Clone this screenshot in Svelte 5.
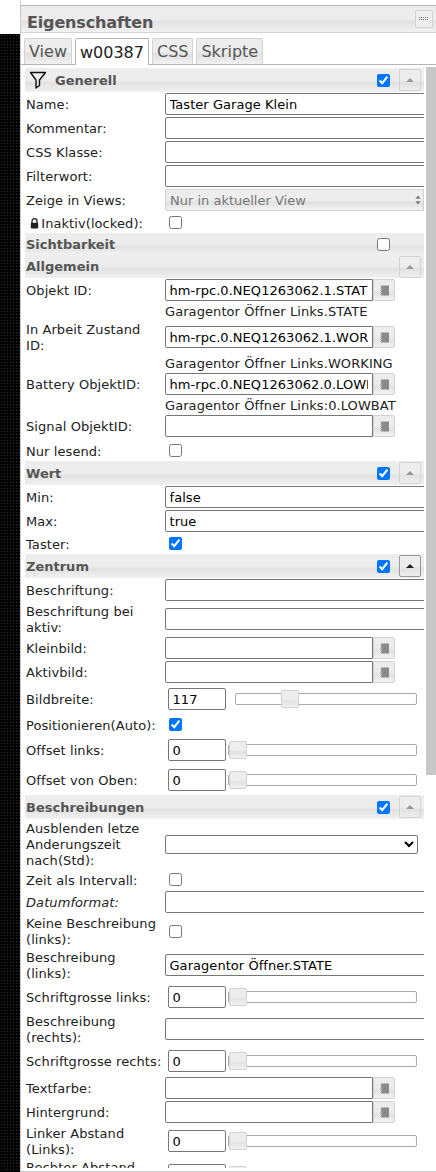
<script>
  const sections = [
    {
      title: "Generell", filter: true, check: true, toggle: true,
      rows: [
        { label: "Name:", type: "text", value: "Taster Garage Klein" },
        { label: "Kommentar:", type: "text" },
        { label: "CSS Klasse:", type: "text" },
        { label: "Filterwort:", type: "text" },
        { label: "Zeige in Views:", type: "views", value: "Nur in aktueller View" },
        { label: "Inaktiv(locked):", type: "check", lock: true },
      ],
    },
    { title: "Sichtbarkeit", check: false, rows: [] },
    {
      title: "Allgemein", toggle: true,
      rows: [
        { label: "Objekt ID:", type: "id", value: "hm-rpc.0.NEQ1263062.1.STATE", note: "Garagentor Öffner Links.STATE" },
        { label: "In Arbeit Zustand ID:", lines: 2, type: "id", value: "hm-rpc.0.NEQ1263062.1.WORKING", note: "Garagentor Öffner Links.WORKING" },
        { label: "Battery ObjektID:", type: "id", value: "hm-rpc.0.NEQ1263062.0.LOWBAT", note: "Garagentor Öffner Links:0.LOWBAT" },
        { label: "Signal ObjektID:", type: "id", note: "" },
        { label: "Nur lesend:", type: "check" },
      ],
    },
    {
      title: "Wert", check: true, toggle: true,
      rows: [
        { label: "Min:", type: "text", value: "false" },
        { label: "Max:", type: "text", value: "true" },
        { label: "Taster:", type: "check", checked: true },
      ],
    },
    {
      title: "Zentrum", check: true, toggle: true, hover: true,
      rows: [
        { label: "Beschriftung:", type: "text" },
        { label: "Beschriftung bei aktiv:", lines: 2, type: "text" },
        { label: "Kleinbild:", type: "id" },
        { label: "Aktivbild:", type: "id" },
        { label: "Bildbreite:", type: "slider", value: 117, pos: 45, spaced: true },
        { label: "Positionieren(Auto):", type: "check", checked: true },
        { label: "Offset links:", type: "slider", value: 0, pos: 0 },
        { label: "Offset von Oben:", type: "slider", value: 0, pos: 0 },
      ],
    },
    {
      title: "Beschreibungen", check: true, toggle: true,
      rows: [
        { label: "Ausblenden letze Anderungszeit nach(Std):", lines: 3, type: "select" },
        { label: "Zeit als Intervall:", type: "check" },
        { label: "Datumformat:", type: "text", italic: true },
        { label: "Keine Beschreibung (links):", lines: 2, type: "check" },
        { label: "Beschreibung (links):", lines: 2, type: "text", value: "Garagentor Öffner.STATE" },
        { label: "Schriftgrosse links:", type: "slider", value: 0, pos: 0 },
        { label: "Beschreibung (rechts):", lines: 2, type: "text" },
        { label: "Schriftgrosse rechts:", type: "slider", value: 0, pos: 0 },
        { label: "Textfarbe:", type: "id" },
        { label: "Hintergrund:", type: "id" },
        { label: "Linker Abstand (Links):", lines: 2, type: "slider", value: 0, pos: 0 },
        { label: "Rechter Abstand (Rechts):", lines: 2, type: "slider", value: 0, pos: 0 },
      ],
    },
  ];
  const tabs = ["View", "w00387", "CSS", "Skripte"];
</script>

<div class="page">
  <div class="strip">
    <div class="strip-top"></div>
    <div class="strip-dots"></div>
  </div>

  <div class="panel">
    <div class="title-bar">
      <span class="title">Eigenschaften</span>
      <span class="title-btn">
        <svg width="10" height="4" viewBox="0 0 10 4">
          <path d="M0 .5h9M0 2.5h9" stroke="#777" stroke-width="1" stroke-dasharray="1 1" />
        </svg>
      </span>
    </div>

    <div class="tabs">
      {#each tabs as tab}
        <span class="tab" class:active={tab === "w00387"}>{tab}</span>
      {/each}
    </div>

    <div class="scroll-area">
      <div class="list">
        {#each sections as s}
          <div class="head" class:no-toggle={!s.toggle} class:no-check={s.check === undefined}>
            {#if s.filter}
              <svg class="funnel" width="18" height="20" viewBox="0 0 18 20">
                <path d="M1.5 2.5h15l-6 7.5v5.5l-3.5 2.5v-8z" fill="none" stroke="#111" stroke-width="1.4" stroke-linejoin="round" />
              </svg>
            {/if}
            <span class="head-title">{s.title}</span>
            {#if s.check !== undefined}
              <input class="head-check" type="checkbox" checked={s.check} />
            {/if}
            {#if s.toggle}
              <span class="collapse" class:hover={s.hover}><span class="arrow"></span></span>
            {/if}
          </div>

          {#each s.rows as r}
            <div
              class="row"
              class:check-row={r.type === "check"}
              class:slider-row={r.type === "slider"}
              class:two-line={r.lines === 2}
              class:three-line={r.lines === 3}
            >
              <div class="label" class:italic={r.italic} class:narrow={r.lines}>
                {#if r.lock}
                  <svg class="lock" width="9" height="11" viewBox="0 0 9 11">
                    <path d="M2 5V3.2a2.5 2.5 0 0 1 5 0V5" fill="none" stroke="#222" stroke-width="1.3" />
                    <rect x="0.8" y="4.8" width="7.4" height="5.6" rx="1" fill="#222" />
                  </svg>
                {/if}
                {r.label}
              </div>
              <div class="field">
                {#if r.type === "text"}
                  <input class="input wide" type="text" value={r.value ?? ""} />
                {:else if r.type === "views"}
                  <div class="views">
                    <span>{r.value}</span>
                    <svg class="updown" width="6" height="10" viewBox="0 0 6 10">
                      <path d="M3 0.5l2.5 3.2h-5zM3 9.5l2.5-3.2h-5z" fill="#777" />
                    </svg>
                  </div>
                {:else if r.type === "check"}
                  <input class="check" type="checkbox" checked={r.checked} />
                {:else if r.type === "id"}
                  <input class="input id" type="text" value={r.value ?? ""} />
                  <span class="pick">
                    <svg width="9" height="11" viewBox="0 0 9 11">
                      <rect x="1" y="0.5" width="8" height="10" fill="#8a8a8a" />
                      <path d="M0 1.5h2M0 3.5h2M0 5.5h2M0 7.5h2M0 9.5h2" stroke="#bbb" stroke-width="1" />
                    </svg>
                  </span>
                {:else if r.type === "select"}
                  <select class="native"><option></option></select>
                {:else if r.type === "slider"}
                  <input class="input number" type="text" value={r.value} />
                  <div class="track" class:spaced={r.spaced}>
                    <span class="handle" style="left: {r.pos}px"></span>
                  </div>
                {/if}
              </div>
            </div>
            {#if r.note !== undefined}
              <div class="note" class:empty={r.note === ""}>{r.note}</div>
            {/if}
          {/each}
        {/each}
      </div>
      <div class="scrollbar"></div>
    </div>
  </div>
</div>

<style>
  :global(body) {
    margin: 0;
    background: #fff;
  }

  .page {
    display: flex;
    width: 436px;
    height: 1172px;
    overflow: hidden;
    font-family: "DejaVu Sans", Verdana, sans-serif;
    font-size: 13px;
    color: #222;
  }

  .strip {
    display: flex;
    flex-direction: column;
    flex: none;
    width: 20px;
  }

  .strip-top {
    flex: none;
    height: 34px;
    background: #fff;
  }

  .strip-dots {
    flex: 1;
    background-color: #000;
    background-image: radial-gradient(#333 0.6px, transparent 0.7px);
    background-size: 3px 3px;
  }

  .panel {
    display: flex;
    flex-direction: column;
    flex: 1;
    min-width: 0;
    border-left: 1px solid #c8c8c8;
    border-bottom: 1px solid #c8c8c8;
  }

  .title-bar {
    display: flex;
    flex: none;
    align-items: center;
    justify-content: space-between;
    box-sizing: border-box;
    margin-top: 5px;
    border-top: 1px solid #b5b5b5;
    border-bottom: 1px solid #d3d3d3;
    background: linear-gradient(#ededed 0 50%, #e2e2e2 60%, #f1f1f1 100%);
    padding: 6px 3px 0 6px;
    height: 28px;
  }

  .title {
    color: #555;
    font-weight: 700;
    font-size: 16px;
    letter-spacing: -0.15px;
  }

  .title-btn {
    display: flex;
    align-items: center;
    justify-content: center;
    box-sizing: border-box;
    margin-top: -6px;
    border: 1px solid #d3d3d3;
    border-radius: 2px;
    background: #eee;
    width: 18px;
    height: 18px;
  }

  .tabs {
    display: flex;
    flex: none;
    gap: 3px;
    box-sizing: border-box;
    border-bottom: 1px solid #b5b5b5;
    padding: 5px 0 0 3px;
    height: 32px;
  }

  .tab {
    display: flex;
    align-items: center;
    box-sizing: border-box;
    border: 1px solid #d3d3d3;
    border-bottom: none;
    border-radius: 2px 2px 0 0;
    background: linear-gradient(#ededed 0 50%, #e2e2e2 60%, #f1f1f1 100%);
    padding: 0 4px;
    height: 26px;
    color: #555;
    font-size: 16px;
  }

  .tab.active {
    margin-bottom: -1px;
    border-color: #b5b5b5;
    background: #fff;
    height: 27px;
    color: #222;
  }

  .scroll-area {
    display: flex;
    flex: 1;
    min-height: 0;
    padding: 2px 0 3px 4px;
    overflow: hidden;
  }

  .list {
    flex: none;
    margin-top: 1px;
    width: 399px;
    overflow: hidden;
  }

  .scrollbar {
    flex: none;
    margin-left: 2px;
    background: #c8c8c8;
    width: 10px;
    height: 708px;
  }

  .head {
    display: flex;
    align-items: center;
    box-sizing: border-box;
    background: linear-gradient(#ededed 0 50%, #e2e2e2 62%, #f1f1f1 100%);
    padding-left: 1px;
    height: 24px;
    color: #555;
    font-weight: 700;
  }

  .head.no-check {
    height: 23px;
  }

  .head.no-toggle {
    padding-right: 34px;
    height: 22px;
  }

  .funnel {
    flex: none;
    margin: 0 8px 0 3px;
  }

  .head-title {
    flex: 1;
  }

  .head-check {
    flex: none;
    margin: 0;
    accent-color: #0075ff;
  }

  .collapse {
    display: flex;
    flex: none;
    align-items: center;
    justify-content: center;
    box-sizing: border-box;
    margin: 0 3px 0 9px;
    border: 1px solid #d3d3d3;
    border-radius: 2px;
    width: 22px;
    height: 22px;
  }

  .collapse.hover {
    border-color: #999;
  }

  .arrow {
    border-right: 4px solid transparent;
    border-bottom: 4px solid #999;
    border-left: 4px solid transparent;
  }

  .collapse.hover .arrow {
    border-bottom-color: #222;
  }

  .row {
    display: flex;
    flex: none;
    align-items: center;
    height: 24px;
  }

  .row.check-row {
    height: 21px;
  }

  .row.slider-row {
    height: 30px;
  }

  .row.two-line {
    height: 34px;
  }

  .row.three-line {
    height: 50px;
  }

  .label {
    flex: none;
    box-sizing: border-box;
    padding: 2px 0 0 1px;
    width: 140px;
    line-height: 16px;
    letter-spacing: 0.08px;
    white-space: nowrap;
  }

  .label.narrow {
    padding-right: 7px;
    white-space: normal;
  }

  .label.italic {
    font-style: italic;
  }

  .lock {
    margin: 0 -2px -1px 4px;
  }

  .field {
    display: flex;
    flex: 1;
    align-items: center;
    min-width: 0;
  }

  .input {
    box-sizing: border-box;
    outline: none;
    border: 1px solid #767676;
    border-radius: 2px;
    background: #fff;
    padding: 1px 4px 1px 3.5px;
    height: 22px;
    color: #000;
    font: inherit;
    letter-spacing: 0.05px;
  }

  .input.wide {
    flex: none;
    width: 280px;
  }

  .input.id {
    flex: none;
    border-radius: 2px 0 0 2px;
    width: 208px;
  }

  .input.number {
    flex: none;
    margin-left: 3px;
    width: 58px;
  }

  .pick {
    display: flex;
    flex: none;
    align-items: center;
    justify-content: center;
    box-sizing: border-box;
    border: 1px solid #d3d3d3;
    border-radius: 0 2px 2px 0;
    background: linear-gradient(#ededed 0 50%, #e2e2e2 62%, #f1f1f1 100%);
    width: 22px;
    height: 22px;
  }

  .views {
    display: flex;
    flex: none;
    align-items: center;
    justify-content: space-between;
    box-sizing: border-box;
    border: 1px solid #d3d3d3;
    border-radius: 2px 0 0 2px;
    background: linear-gradient(#ededed 0 50%, #e2e2e2 62%, #f1f1f1 100%);
    padding: 0 2px 0 4px;
    width: 100%;
    height: 22px;
    color: #777;
  }

  .check {
    margin: 0 0 0 4px;
    accent-color: #0075ff;
  }

  .native {
    box-sizing: border-box;
    border: 1px solid #767676;
    border-radius: 2px;
    background: #fff;
    width: 253px;
    height: 19px;
  }

  .track {
    position: relative;
    flex: none;
    box-sizing: border-box;
    margin-left: 2px;
    border: 1px solid #aaa;
    border-radius: 2px;
    background: #fff;
    width: 189px;
    height: 12px;
  }

  .track.spaced {
    margin-left: 9px;
    width: 182px;
  }

  .handle {
    position: absolute;
    top: -4px;
    box-sizing: border-box;
    border: 1px solid #d3d3d3;
    border-radius: 2px;
    background: linear-gradient(#ededed 0 50%, #e2e2e2 62%, #f1f1f1 100%);
    width: 18px;
    height: 18px;
  }

  .note {
    padding: 1px 0 0 140px;
    height: 18px;
    box-sizing: border-box;
    line-height: 18px;
    letter-spacing: 0.08px;
    white-space: nowrap;
  }

  .note.empty {
    padding-top: 0;
    height: 2px;
  }
</style>
